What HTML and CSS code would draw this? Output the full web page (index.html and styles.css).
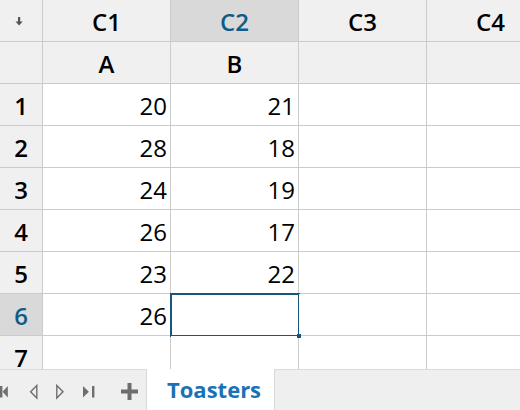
FILE: index.html
```html
<!DOCTYPE html>
<html>
<head>
<meta charset="utf-8">
<link rel="stylesheet" href="styles.css">
</head>
<body>
<div class="app">
  <div class="sheet">
    <div class="grid">
      <div class="hd corner">
        <svg width="10" height="10" viewBox="0 0 10 10" class="corner-icon"><rect x="3" y="0" width="2.2" height="5" fill="#555"/><polygon points="0.5,4.5 7.7,4.5 4.1,8.5" fill="#555"/></svg>
      </div>
      <div class="hd">C1</div>
      <div class="hd sel">C2</div>
      <div class="hd">C3</div>
      <div class="hd">C4</div>

      <div class="hd"></div>
      <div class="hd">A</div>
      <div class="hd">B</div>
      <div class="hd"></div>
      <div class="hd"></div>

      <div class="rh">1</div><div class="c">20</div><div class="c">21</div><div class="c"></div><div class="c"></div>
      <div class="rh">2</div><div class="c">28</div><div class="c">18</div><div class="c"></div><div class="c"></div>
      <div class="rh">3</div><div class="c">24</div><div class="c">19</div><div class="c"></div><div class="c"></div>
      <div class="rh">4</div><div class="c">26</div><div class="c">17</div><div class="c"></div><div class="c"></div>
      <div class="rh">5</div><div class="c">23</div><div class="c">22</div><div class="c"></div><div class="c"></div>
      <div class="rh sel">6</div><div class="c">26</div><div class="c active"></div><div class="c"></div><div class="c"></div>
      <div class="rh">7</div><div class="c"></div><div class="c"></div><div class="c"></div><div class="c"></div>
    </div>
  </div>
  <div class="tabbar">
    <svg class="nav" width="146" height="40" viewBox="0 0 146 40">
      <g fill="#6e6e6e">
        <rect x="0" y="16" width="2.4" height="11.5"/>
        <polygon points="7.8,16 2.6,21.75 7.8,27.5"/>
        <polygon points="83,16 88.8,21.75 83,27.5"/>
        <rect x="92" y="16" width="2.4" height="11.5"/>
        <rect x="121" y="19.5" width="17" height="4"/>
        <rect x="127.5" y="13" width="4" height="17"/>
      </g>
      <g fill="none" stroke="#6e6e6e" stroke-width="1.4" stroke-linejoin="miter">
        <polygon points="36.8,15.5 30.6,21.75 36.8,28"/>
        <polygon points="56.8,15.5 63,21.75 56.8,28"/>
      </g>
    </svg>
    <div class="tab">Toasters</div>
  </div>
</div>
</body>
</html>
```

FILE: styles.css
```css
html, body {
  margin: 0;
  padding: 0;
  background: #ffffff;
}
.app {
  width: 520px;
  height: 410px;
  overflow: hidden;
  display: flex;
  flex-direction: column;
  font-family: "Open Sans", "Noto Sans", sans-serif;
  color: #000;
}
.sheet {
  height: 369px;
  overflow: hidden;
  flex: none;
}
.grid {
  display: grid;
  grid-template-columns: 42px repeat(4, 127px);
  grid-auto-rows: 41px;
  gap: 1px;
  background: #cbcbcb;
  width: max-content;
}
.hd, .rh {
  background: #f0f0f0;
  font-size: 24px;
  font-weight: 600;
  line-height: 38px;
  padding-top: 3px;
  text-align: center;
}
.hd.sel, .rh.sel {
  background: #d9d9d9;
  color: #0f5c8a;
}
.corner {
  display: flex;
  align-items: flex-start;
  justify-content: flex-start;
  padding: 0;
}
.corner-icon {
  margin: 17px 0 0 15px;
}
.c {
  background: #fff;
  font-size: 24px;
  line-height: 38px;
  padding-top: 3px;
  padding-right: 3px;
  text-align: right;
  position: relative;
}
.c.active::after {
  content: "";
  position: absolute;
  left: -1px;
  top: -1px;
  right: -2px;
  bottom: -2px;
  border: 2px solid #17557a;
}
.c.active::before {
  content: "";
  position: absolute;
  right: -3px;
  bottom: -3px;
  width: 4px;
  height: 4px;
  background: #17557a;
  z-index: 1;
}
.tabbar {
  flex: none;
  height: 40px;
  border-top: 1px solid #dadada;
  background: #efefef;
  display: flex;
  align-items: stretch;
}
.nav {
  display: block;
  flex: none;
}
.tab {
  flex: none;
  width: 107px;
  padding-left: 20px;
  margin-top: -1px;
  background: #fff;
  border-left: 1px solid #d8d8d8;
  border-right: 1px solid #d8d8d8;
  color: #1a72b6;
  font-weight: 700;
  font-size: 22px;
  line-height: 41px;
}
```
